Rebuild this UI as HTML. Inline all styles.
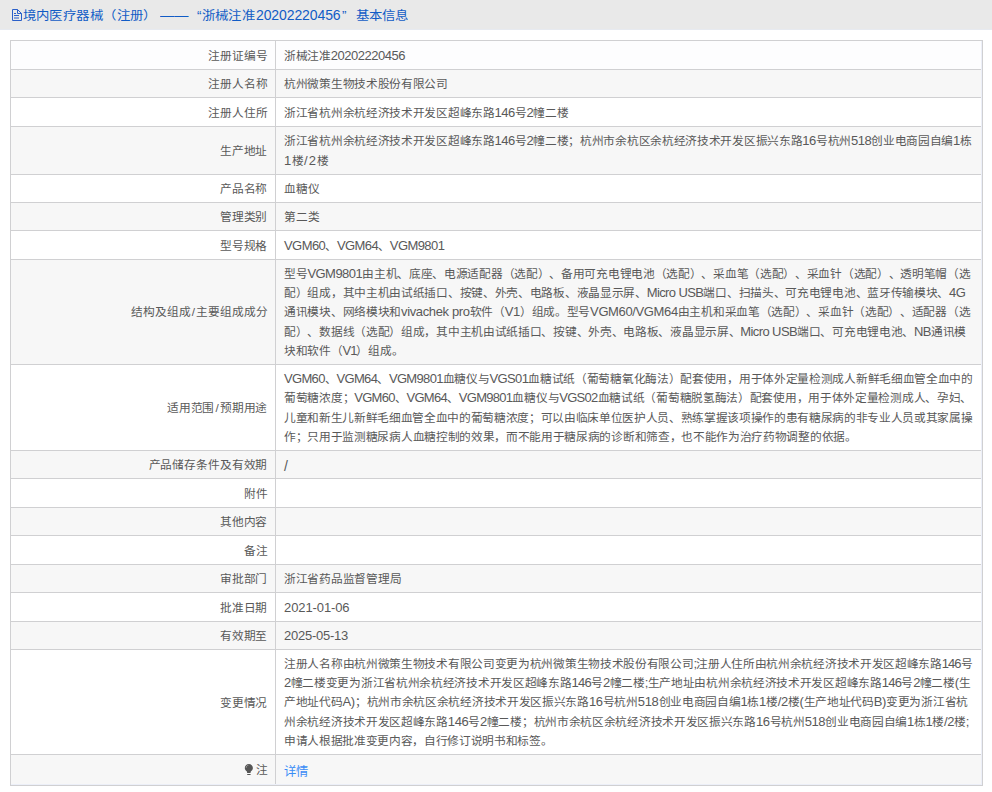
<!DOCTYPE html>
<html lang="zh-CN"><head><meta charset="utf-8"><style>
html,body{margin:0;padding:0;background:#fff;width:992px;height:792px;overflow:hidden}
body{font-family:"Liberation Sans",sans-serif;position:relative;text-spacing-trim:space-all}
.hd{position:absolute;left:0;top:0;width:992px;height:29px;background:#e9e9e9;border-bottom:1px solid #e7eaf0}
.ht{position:absolute;top:6.8px;font-size:13.4px;line-height:18px;color:#115cc6;white-space:nowrap;transform:scaleY(0.9);transform-origin:0 15px}
.hl{position:absolute;left:0;width:973px;left:10px;height:1px;background:#d0d0d2}
.vl{position:absolute;width:1px;background:#d0d0d2}
.bg{position:absolute;left:11px;width:971px}
.w{background:#fff}.w0{background:#fdfdfe}.g{background:#f7f7f7}
.lb{position:absolute;right:724.62px;font-size:11.7px;line-height:19.15px;color:#595959;white-space:nowrap;text-align:right;letter-spacing:-0.12px}
.ct{position:absolute;left:284px;font-size:11.7px;line-height:19.15px;color:#595959;white-space:nowrap;letter-spacing:-0.3px}
.l{font-size:13px;line-height:0}
.sl{margin:0 1.2px}
</style></head><body>

<div class="hd"></div>
<svg style="position:absolute;left:11px;top:9px" width="12" height="13" viewBox="0 0 12 13"><path d="M1.5 0.5H6.5L10.5 4.5V11.5H1.5Z" fill="none" stroke="#2a5fc9" stroke-width="1"/><path d="M6.5 0.5V4.5H10.5" fill="none" stroke="#2a5fc9" stroke-width="1"/><path d="M3 4.5H5M3 6.5H8M3 9H8" stroke="#2a5fc9" stroke-width="1"/></svg>
<div class="ht" id="h1" style="left:22.5px;letter-spacing:0.43px">境内医疗器械（注册）</div>
<div class="ht" id="h2" style="left:160.3px;top:6.6px;transform:scaleX(1.06);transform-origin:0 0">——</div>
<div class="ht" id="h3" style="left:197px;letter-spacing:0.3px">“浙械注准</div>
<div class="ht" id="h3b" style="left:256px;top:6px;font-size:14px;transform:none;letter-spacing:-0.1px">20202220456</div>
<div class="ht" id="h3c" style="left:342px;transform:none">”</div>
<div class="ht" id="h4" style="left:355.5px">基本信息</div>
<div class="bg w0" style="top:41px;height:28px"></div>
<div class="bg g" style="top:70px;height:27px"></div>
<div class="bg w" style="top:98px;height:28px"></div>
<div class="bg g" style="top:127px;height:47px"></div>
<div class="bg w" style="top:175px;height:27px"></div>
<div class="bg g" style="top:203px;height:27px"></div>
<div class="bg w" style="top:231px;height:28px"></div>
<div class="bg g" style="top:260px;height:104px"></div>
<div class="bg w" style="top:365px;height:85px"></div>
<div class="bg g" style="top:451px;height:27px"></div>
<div class="bg w" style="top:479px;height:28px"></div>
<div class="bg g" style="top:508px;height:27px"></div>
<div class="bg w" style="top:536px;height:28px"></div>
<div class="bg g" style="top:565px;height:27px"></div>
<div class="bg w" style="top:593px;height:28px"></div>
<div class="bg g" style="top:622px;height:27px"></div>
<div class="bg w" style="top:650px;height:104px"></div>
<div class="bg g" style="top:755px;height:30px"></div>
<div class="hl" style="top:40px"></div>
<div class="hl" style="top:69px"></div>
<div class="hl" style="top:97px"></div>
<div class="hl" style="top:126px"></div>
<div class="hl" style="top:174px"></div>
<div class="hl" style="top:202px"></div>
<div class="hl" style="top:230px"></div>
<div class="hl" style="top:259px"></div>
<div class="hl" style="top:364px"></div>
<div class="hl" style="top:450px"></div>
<div class="hl" style="top:478px"></div>
<div class="hl" style="top:507px"></div>
<div class="hl" style="top:535px"></div>
<div class="hl" style="top:564px"></div>
<div class="hl" style="top:592px"></div>
<div class="hl" style="top:621px"></div>
<div class="hl" style="top:649px"></div>
<div class="hl" style="top:754px"></div>
<div class="hl" style="top:785px"></div>
<div class="vl" style="left:10px;top:40px;height:746px"></div>
<div class="vl" style="left:275px;top:40px;height:746px"></div>
<div class="vl" style="left:982px;top:40px;height:746px"></div>
<div style="position:absolute;left:981px;top:41px;width:1px;height:744px;background:#eceff8"></div>
<div style="position:absolute;left:11px;top:784px;width:971px;height:1px;background:#eceff8"></div>
<div class="lb" style="top:46.02px">注册证编号</div>
<div class="ct" id="L0" style="top:46.02px">浙械注准<span class="l" style="letter-spacing:-0.489px">20202220456</span></div>
<div class="lb" style="top:73.92px">注册人名称</div>
<div class="ct" id="L1" style="top:73.92px;letter-spacing:-0.300px">杭州微策生物技术股份有限公司</div>
<div class="lb" style="top:103.02px">注册人住所</div>
<div class="ct" id="L2" style="top:103.02px">浙江省杭州余杭经济技术开发区超峰东路<span class="l" style="letter-spacing:-0.500px">146</span>号<span class="l" style="letter-spacing:-0.500px">2</span>幢二楼</div>
<div class="lb" style="top:140.93px">生产地址</div>
<div class="ct" id="L3" style="top:131.35px">浙江省杭州余杭经济技术开发区超峰东路<span class="l" style="letter-spacing:-0.500px">146</span>号<span class="l" style="letter-spacing:-0.500px">2</span>幢二楼；杭州市余杭区余杭经济技术开发区振兴东路<span class="l" style="letter-spacing:-0.500px">16</span>号杭州<span class="l" style="letter-spacing:-0.500px">518</span>创业电商园自编<span class="l" style="letter-spacing:-0.500px">1</span>栋</div>
<div class="ct" id="L4" style="top:150.50px"><span class="l" style="letter-spacing:1.134px">1</span>楼<span class="l" style="letter-spacing:1.134px">/2</span>楼</div>
<div class="lb" style="top:178.93px">产品名称</div>
<div class="ct" id="L5" style="top:178.93px;letter-spacing:0.200px">血糖仪</div>
<div class="lb" style="top:206.93px">管理类别</div>
<div class="ct" id="L6" style="top:206.93px;letter-spacing:0.000px">第二类</div>
<div class="lb" style="top:236.03px">型号规格</div>
<div class="ct" id="L7" style="top:236.03px"><span class="l" style="letter-spacing:-0.575px">VGM60</span>、<span class="l" style="letter-spacing:-0.575px">VGM64</span>、<span class="l" style="letter-spacing:-0.575px">VGM9801</span></div>
<div class="lb" style="top:302.43px">结构及组成<span class="sl">/</span>主要组成成分</div>
<div class="ct" id="L8" style="top:264.12px">型号<span class="l" style="letter-spacing:-0.541px">VGM9801</span>由主机、底座、电源适配器（选配）、备用可充电锂电池（选配）、采血笔（选配）、采血针（选配）、透明笔帽（选</div>
<div class="ct" id="L9" style="top:283.27px">配）组成，其中主机由试纸插口、按键、外壳、电路板、液晶显示屏、<span class="l" style="letter-spacing:-0.602px">Micro USB</span>端口、扫描头、可充电锂电池、蓝牙传输模块、<span class="l" style="letter-spacing:-0.602px">4G</span></div>
<div class="ct" id="L10" style="top:302.43px">通讯模块、网络模块和<span class="l" style="letter-spacing:-0.368px">vivachek pro</span>软件（<span class="l" style="letter-spacing:-0.368px">V1</span>）组成。型号<span class="l" style="letter-spacing:-0.368px">VGM60/VGM64</span>由主机和采血笔（选配）、采血针（选配）、适配器（选</div>
<div class="ct" id="L11" style="top:321.57px">配）、数据线（选配）组成，其中主机由试纸插口、按键、外壳、电路板、液晶显示屏、<span class="l" style="letter-spacing:-0.600px">Micro USB</span>端口、可充电锂电池、<span class="l" style="letter-spacing:-0.600px">NB</span>通讯模</div>
<div class="ct" id="L12" style="top:340.73px">块和软件（<span class="l" style="letter-spacing:-1.000px">V1</span>）组成。</div>
<div class="lb" style="top:397.93px">适用范围<span class="sl">/</span>预期用途</div>
<div class="ct" id="L13" style="top:369.20px"><span class="l" style="letter-spacing:-0.665px">VGM60</span>、<span class="l" style="letter-spacing:-0.665px">VGM64</span>、<span class="l" style="letter-spacing:-0.665px">VGM9801</span>血糖仪与<span class="l" style="letter-spacing:-0.665px">VGS01</span>血糖试纸（葡萄糖氧化酶法）配套使用，用于体外定量检测成人新鲜毛细血管全血中的</div>
<div class="ct" id="L14" style="top:388.35px">葡萄糖浓度；<span class="l" style="letter-spacing:-0.700px">VGM60</span>、<span class="l" style="letter-spacing:-0.700px">VGM64</span>、<span class="l" style="letter-spacing:-0.700px">VGM9801</span>血糖仪与<span class="l" style="letter-spacing:-0.700px">VGS02</span>血糖试纸（葡萄糖脱氢酶法）配套使用，用于体外定量检测成人、孕妇、</div>
<div class="ct" id="L15" style="top:407.50px;letter-spacing:-0.335px">儿童和新生儿新鲜毛细血管全血中的葡萄糖浓度；可以由临床单位医护人员、熟练掌握该项操作的患有糖尿病的非专业人员或其家属操</div>
<div class="ct" id="L16" style="top:426.65px;letter-spacing:-0.315px">作；只用于监测糖尿病人血糖控制的效果，而不能用于糖尿病的诊断和筛查，也不能作为治疗药物调整的依据。</div>
<div class="lb" style="top:454.93px">产品储存条件及有效期</div>
<div class="ct" id="L17" style="top:456.93px"><span style="font-size:14px;line-height:0">/</span></div>
<div class="lb" style="top:484.03px">附件</div>
<div class="lb" style="top:511.93px">其他内容</div>
<div class="lb" style="top:541.02px">备注</div>
<div class="lb" style="top:568.92px">审批部门</div>
<div class="ct" id="L18" style="top:568.92px;letter-spacing:-0.276px">浙江省药品监督管理局</div>
<div class="lb" style="top:598.02px">批准日期</div>
<div class="ct" id="L19" style="top:598.02px"><span class="l" style="letter-spacing:-0.100px">2021-01-06</span></div>
<div class="lb" style="top:625.92px">有效期至</div>
<div class="ct" id="L20" style="top:625.92px"><span class="l" style="letter-spacing:-0.240px">2025-05-13</span></div>
<div class="lb" style="top:693.02px">变更情况</div>
<div class="ct" id="L21" style="top:654.12px">注册人名称由杭州微策生物技术有限公司变更为杭州微策生物技术股份有限公司<span class="l" style="letter-spacing:-1.000px">;</span>注册人住所由杭州余杭经济技术开发区超峰东路<span class="l" style="letter-spacing:-1.000px">146</span>号</div>
<div class="ct" id="L22" style="top:673.27px"><span class="l" style="letter-spacing:-0.636px">2</span>幢二楼变更为浙江省杭州余杭经济技术开发区超峰东路<span class="l" style="letter-spacing:-0.636px">146</span>号<span class="l" style="letter-spacing:-0.636px">2</span>幢二楼<span class="l" style="letter-spacing:-0.636px">;</span>生产地址由杭州余杭经济技术开发区超峰东路<span class="l" style="letter-spacing:-0.636px">146</span>号<span class="l" style="letter-spacing:-0.636px">2</span>幢二楼<span class="l" style="letter-spacing:-0.636px">(</span>生</div>
<div class="ct" id="L23" style="top:692.42px">产地址代码<span class="l" style="letter-spacing:-0.329px">A)</span>；杭州市余杭区余杭经济技术开发区振兴东路<span class="l" style="letter-spacing:-0.329px">16</span>号杭州<span class="l" style="letter-spacing:-0.329px">518</span>创业电商园自编<span class="l" style="letter-spacing:-0.329px">1</span>栋<span class="l" style="letter-spacing:-0.329px">1</span>楼<span class="l" style="letter-spacing:-0.329px">/2</span>楼<span class="l" style="letter-spacing:-0.329px">(</span>生产地址代码<span class="l" style="letter-spacing:-0.329px">B)</span>变更为浙江省杭</div>
<div class="ct" id="L24" style="top:711.58px">州余杭经济技术开发区超峰东路<span class="l" style="letter-spacing:-0.415px">146</span>号<span class="l" style="letter-spacing:-0.415px">2</span>幢二楼；杭州市余杭区余杭经济技术开发区振兴东路<span class="l" style="letter-spacing:-0.415px">16</span>号杭州<span class="l" style="letter-spacing:-0.415px">518</span>创业电商园自编<span class="l" style="letter-spacing:-0.415px">1</span>栋<span class="l" style="letter-spacing:-0.415px">1</span>楼<span class="l" style="letter-spacing:-0.415px">/2</span>楼<span class="l" style="letter-spacing:-0.415px">;</span></div>
<div class="ct" id="L25" style="top:730.73px;letter-spacing:-0.327px">申请人根据批准变更内容，自行修订说明书和标签。</div>
<div class="lb" style="top:760.42px">注</div>
<svg style="position:absolute;left:244px;top:763px" width="10" height="13" viewBox="0 0 10 13"><path d="M4.85 1C2.55 1 0.8 2.75 0.8 4.9C0.8 6.45 1.7 7.5 2.9 8.5L3.2 9.9H6.5L6.8 8.5C8 7.5 8.9 6.45 8.9 4.9C8.9 2.75 7.15 1 4.85 1Z" fill="#555"/><rect x="3.2" y="11" width="3.4" height="1" fill="#555"/><path d="M2.2 4.8C2.2 3.4 3.1 2.4 4.4 2.2" fill="none" stroke="#aaa" stroke-width="0.8"/></svg>
<div class="ct" id="L26" style="top:762.62px;color:#3a8cf6;font-size:12.3px;letter-spacing:-0.2px">详情</div>
</body></html>
